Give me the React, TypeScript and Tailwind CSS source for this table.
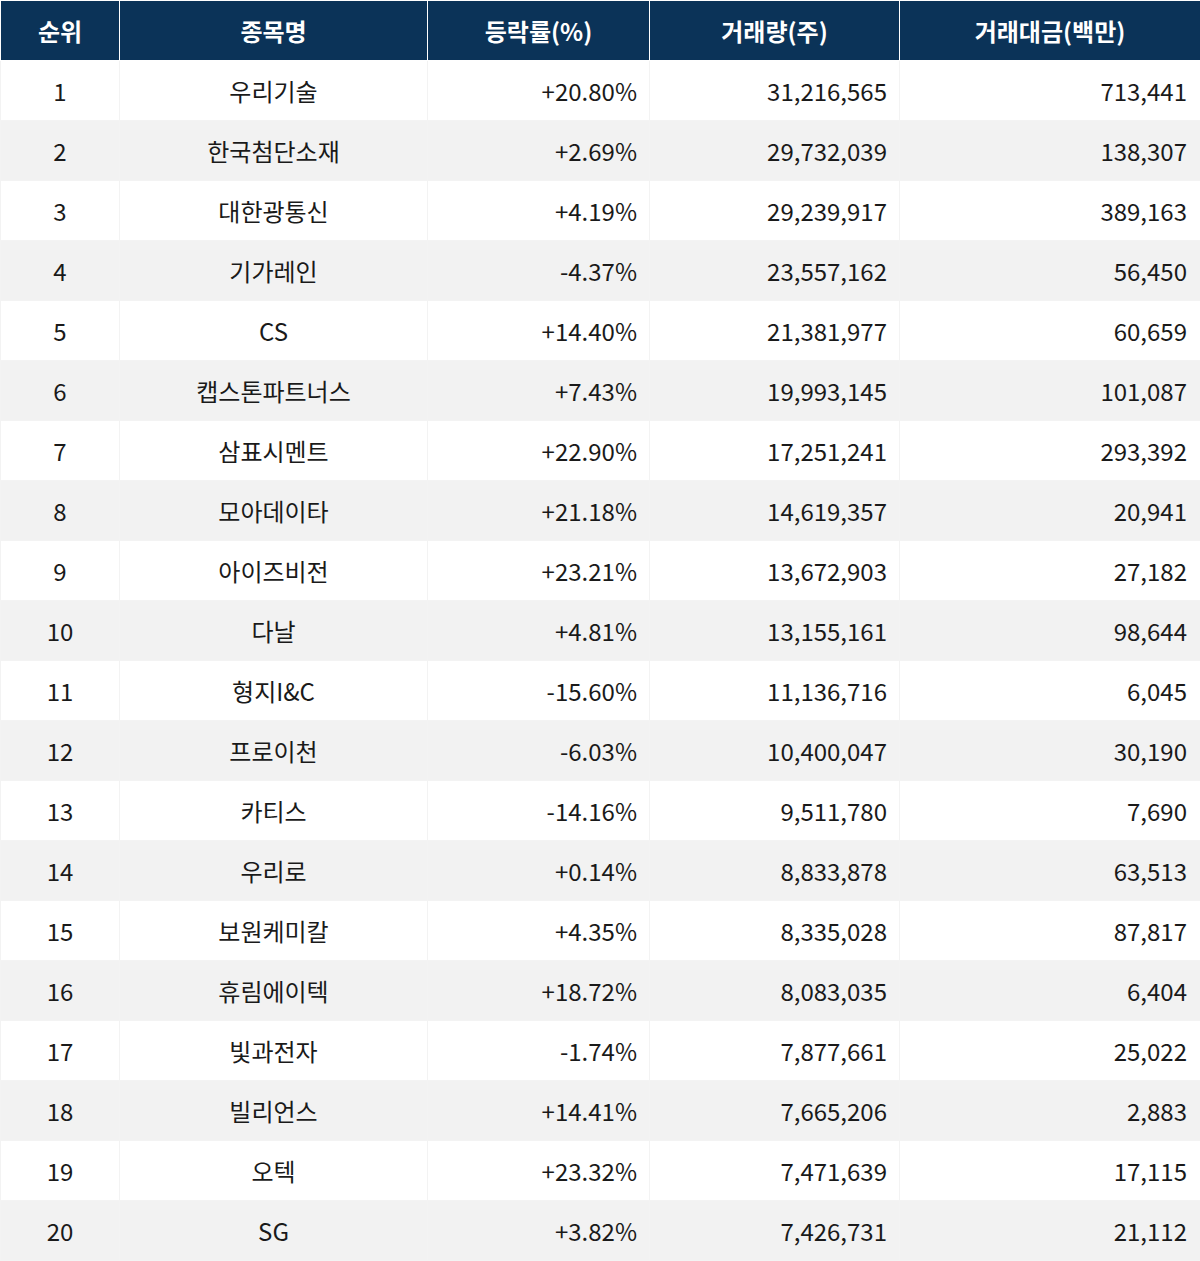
const rows: [string, string, string, string, string][] = [
  ["1", "우리기술", "+20.80%", "31,216,565", "713,441"],
  ["2", "한국첨단소재", "+2.69%", "29,732,039", "138,307"],
  ["3", "대한광통신", "+4.19%", "29,239,917", "389,163"],
  ["4", "기가레인", "-4.37%", "23,557,162", "56,450"],
  ["5", "CS", "+14.40%", "21,381,977", "60,659"],
  ["6", "캡스톤파트너스", "+7.43%", "19,993,145", "101,087"],
  ["7", "삼표시멘트", "+22.90%", "17,251,241", "293,392"],
  ["8", "모아데이타", "+21.18%", "14,619,357", "20,941"],
  ["9", "아이즈비전", "+23.21%", "13,672,903", "27,182"],
  ["10", "다날", "+4.81%", "13,155,161", "98,644"],
  ["11", "형지I&C", "-15.60%", "11,136,716", "6,045"],
  ["12", "프로이천", "-6.03%", "10,400,047", "30,190"],
  ["13", "카티스", "-14.16%", "9,511,780", "7,690"],
  ["14", "우리로", "+0.14%", "8,833,878", "63,513"],
  ["15", "보원케미칼", "+4.35%", "8,335,028", "87,817"],
  ["16", "휴림에이텍", "+18.72%", "8,083,035", "6,404"],
  ["17", "빛과전자", "-1.74%", "7,877,661", "25,022"],
  ["18", "빌리언스", "+14.41%", "7,665,206", "2,883"],
  ["19", "오텍", "+23.32%", "7,471,639", "17,115"],
  ["20", "SG", "+3.82%", "7,426,731", "21,112"],
]

const headers = ["순위", "종목명", "등락률(%)", "거래량(주)", "거래대금(백만)"]

export default function App() {
  return (
    <div className="w-[1200px] bg-white font-['Noto_Sans_CJK_KR','Noto_Sans',sans-serif] text-[#1a1a1a]">
      <table className="w-[1200px] table-fixed border-collapse text-[24px] leading-none">
        <colgroup>
          <col className="w-[119px]" />
          <col className="w-[308px]" />
          <col className="w-[222px]" />
          <col className="w-[250px]" />
          <col className="w-[301px]" />
        </colgroup>
        <thead>
          <tr className="h-[60px] bg-[#0b3358] text-white">
            {headers.map((h) => (
              <th key={h} className="border border-white text-center font-bold">
                {h}
              </th>
            ))}
          </tr>
        </thead>
        <tbody>
          {rows.map((r, i) => (
            <tr key={r[0]} className={`h-[60px] ${i % 2 === 1 ? "bg-[#f2f2f2]" : "bg-white"}`}>
              <td className="border border-[#f3f3f3] text-center">{r[0]}</td>
              <td className="border border-[#f3f3f3] text-center">{r[1]}</td>
              <td className="border border-[#f3f3f3] pr-3 text-right">{r[2]}</td>
              <td className="border border-[#f3f3f3] pr-3 text-right">{r[3]}</td>
              <td className="border border-[#f3f3f3] pr-[13px] text-right">{r[4]}</td>
            </tr>
          ))}
        </tbody>
      </table>
    </div>
  )
}
